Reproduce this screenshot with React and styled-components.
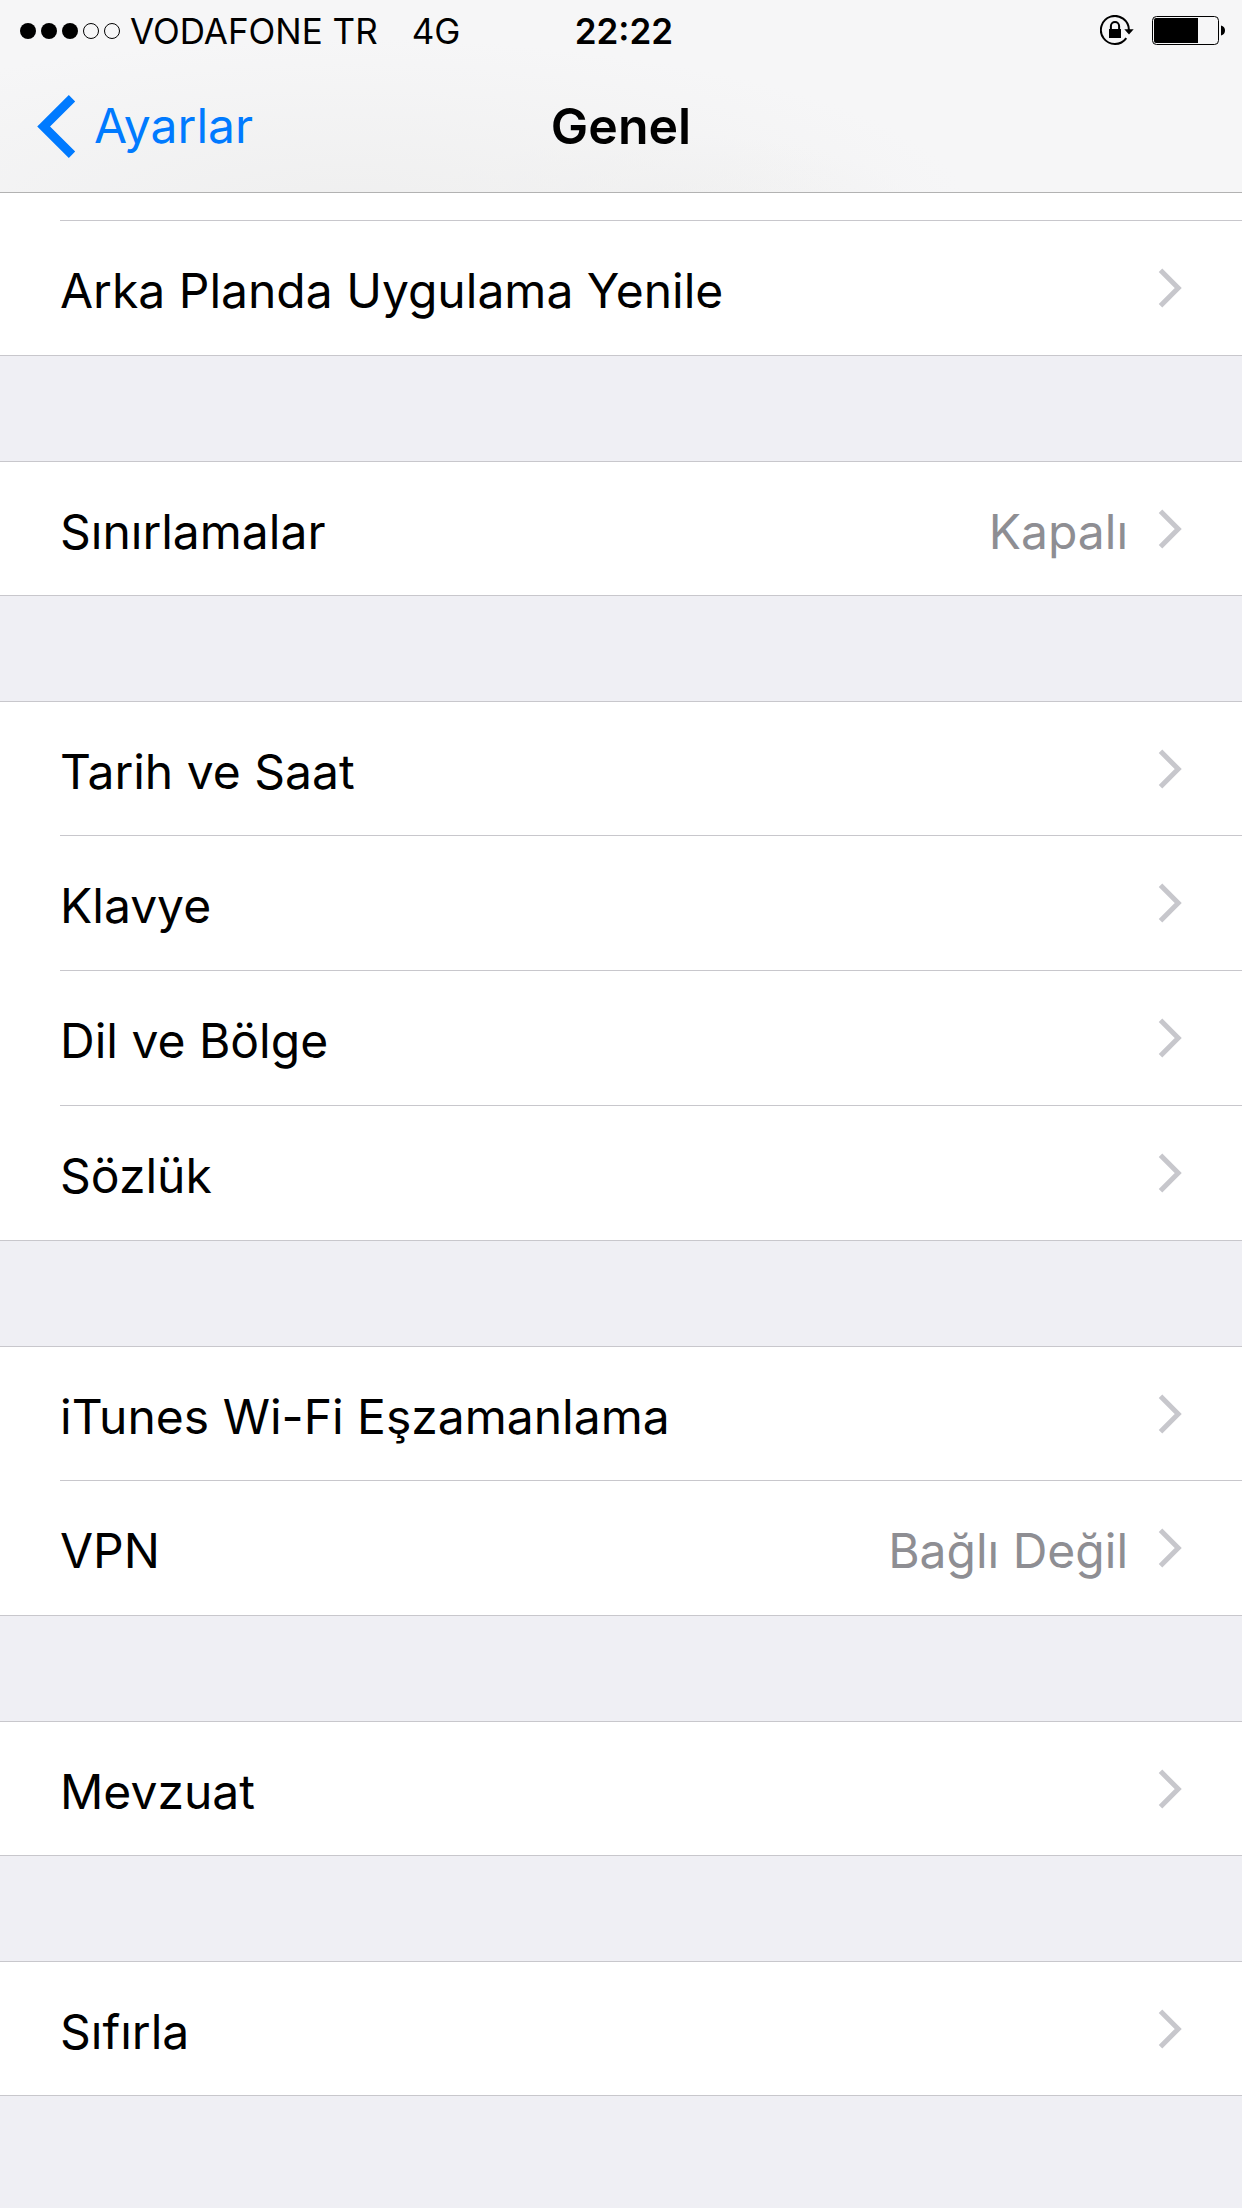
import React from 'react'
import styled, { createGlobalStyle, css, ThemeProvider } from 'styled-components'

const theme = {
  pageBackgroundColor: '#efeff4',
  rowBackgroundColor: '#ffffff',
  separatorColor: '#c8c7cc',
  barBorderColor: '#b2b2b2',
  tintColor: '#007aff',
  textColor: '#000000',
  valueColor: '#8e8e93',
  chevronColor: '#c7c7cc'
}

const GlobalStyle = createGlobalStyle`
  * {
    box-sizing: border-box;
  }
  body {
    margin: 0;
    background: ${props => props.theme.pageBackgroundColor};
    color: ${props => props.theme.textColor};
    font-family: Inter, "Liberation Sans", sans-serif;
  }
`

const StyledScreen = styled.div`
  display: flex;
  flex-direction: column;
  min-height: 100vh;
`

const StyledHeader = styled.header`
  flex-shrink: 0;
  border-bottom: 1px solid ${props => props.theme.barBorderColor};
  background:
    radial-gradient(ellipse 50% 90% at 28% 110%, #efefef, transparent),
    radial-gradient(ellipse 20% 40% at 54% 110%, #f1f1f1, transparent),
    #f6f6f7;
`

const StatusBar = styled.div`
  display: grid;
  grid-template-columns: 46% 1fr auto;
  align-items: center;
  height: 62px;
  padding: 0 16px 0 20px;
  font-size: 35px;
  line-height: 40px;
`

const StatusGroup = styled.div`
  display: flex;
  align-items: center;
  gap: ${props => props.gap};
`

const Time = styled.time`
  font-weight: 600;
`

const NavBar = styled.nav`
  display: grid;
  grid-template-columns: 1fr auto 1fr;
  align-items: center;
  height: 130px;
  padding: 0 36px 2px;
  font-size: 48px;
  line-height: 60px;
`

const BackButton = styled.button`
  display: flex;
  align-items: center;
  justify-self: start;
  gap: 18px;
  padding: 0;
  border: 0;
  background: transparent;
  color: ${props => props.theme.tintColor};
  font: inherit;
  cursor: pointer;
`

const Title = styled.h1`
  margin: 0;
  font-size: 50px;
  font-weight: 600;
`

const Content = styled.main`
  display: flex;
  flex-direction: column;
  gap: 105px;
  padding-bottom: 112px;
`

const StyledGroup = styled.ul`
  margin: 0;
  padding: 0;
  list-style: none;
  background: ${props => props.theme.rowBackgroundColor};
  border: solid ${props => props.theme.separatorColor};
  border-width: 1px 0;
  ${props => props.$isCut && css`
    border-top-width: 0;
  `}
`

const StyledItem = styled.li`
  padding-left: 60px;
  & + & > a {
    min-height: 135px;
    border-top: 1px solid ${props => props.theme.separatorColor};
  }
`

// bottom edge of the row that is scrolled under the header
const CutItem = styled(StyledItem)`
  height: 27px;
`

const RowLink = styled.a`
  display: flex;
  align-items: center;
  gap: 30px;
  min-height: 133px;
  padding-right: 60px;
  color: inherit;
  font-size: 48px;
  line-height: 60px;
  text-decoration: none;
`

const Label = styled.span`
  flex-grow: 1;
  padding-top: 6px;
`

const Value = styled.span`
  padding-top: 6px;
  color: ${props => props.theme.valueColor};
`

const ChevronIcon = styled.svg`
  flex-shrink: 0;
  color: ${props => props.theme.chevronColor};
`

const groups = [
  {
    isCut: true,
    rows: [{ id: 'arka-plan', label: 'Arka Planda Uygulama Yenile' }]
  },
  {
    rows: [{ id: 'sinirlamalar', label: 'Sınırlamalar', value: 'Kapalı' }]
  },
  {
    rows: [
      { id: 'tarih', label: 'Tarih ve Saat' },
      { id: 'klavye', label: 'Klavye' },
      { id: 'dil', label: 'Dil ve Bölge' },
      { id: 'sozluk', label: 'Sözlük' }
    ]
  },
  {
    rows: [
      { id: 'itunes', label: 'iTunes Wi-Fi Eşzamanlama' },
      { id: 'vpn', label: 'VPN', value: 'Bağlı Değil' }
    ]
  },
  {
    rows: [{ id: 'mevzuat', label: 'Mevzuat' }]
  },
  {
    rows: [{ id: 'sifirla', label: 'Sıfırla' }]
  }
]

const Signal = ({ strength }) => (
  <svg width='100' height='16' viewBox='0 0 100 16' aria-hidden='true'>
    {[0, 1, 2, 3, 4].map(i => (
      <circle
        key={i}
        cx={8 + i * 21}
        cy='8'
        r={i < strength ? 8 : 7.5}
        fill={i < strength ? '#000' : 'none'}
        stroke={i < strength ? 'none' : '#000'}
      />
    ))}
  </svg>
)

const RotationLock = () => (
  <svg width='34' height='32' viewBox='0 0 34 32' aria-hidden='true'>
    <path d='M28.9 15A14 14 0 1 0 26.3 23.1' fill='none' stroke='#000' strokeWidth='2' />
    <path d='M24.3 14.3H33.7L29 19.4Z' />
    <path d='M9 14H21V23H9Z' />
    <path d='M10.9 14.5V11A4.1 4.1 0 0 1 19.1 11V14.5' fill='none' stroke='#000' strokeWidth='2' />
  </svg>
)

const Battery = () => (
  <svg width='74' height='32' viewBox='0 0 74 32' aria-hidden='true'>
    <rect x='0.5' y='1.5' width='66' height='28' rx='4' fill='none' stroke='#000' />
    <path d='M4 3H46V28H4Q2 28 2 26V5Q2 3 4 3Z' />
    <path d='M69 10.5Q73 11.5 73 15.5Q73 19.5 69 20.5Z' />
  </svg>
)

const Row = ({ id, label, value }) => (
  <StyledItem>
    <RowLink href={`#${id}`}>
      <Label>{label}</Label>
      {value && <Value>{value}</Value>}
      <ChevronIcon width='24' height='40' viewBox='0 0 24 40' aria-hidden='true'>
        <path d='M2.5 2.3L20.2 20L2.5 37.7' fill='none' stroke='currentColor' strokeWidth='5' />
      </ChevronIcon>
    </RowLink>
  </StyledItem>
)

const Header = () => (
  <StyledHeader>
    <StatusBar>
      <StatusGroup gap='34px'>
        <StatusGroup gap='10px'>
          <Signal strength={3} />
          <span>VODAFONE TR</span>
        </StatusGroup>
        <span>4G</span>
      </StatusGroup>
      <Time>22:22</Time>
      <StatusGroup gap='18px'>
        <RotationLock />
        <Battery />
      </StatusGroup>
    </StatusBar>
    <NavBar>
      <BackButton type='button'>
        <svg width='40' height='64' viewBox='0 0 40 64' aria-hidden='true'>
          <path d='M36 4.2L7.6 32.5L36 60.8' fill='none' stroke='currentColor' strokeWidth='9' />
        </svg>
        Ayarlar
      </BackButton>
      <Title>Genel</Title>
    </NavBar>
  </StyledHeader>
)

const App = () => (
  <ThemeProvider theme={theme}>
    <GlobalStyle />
    <StyledScreen>
      <Header />
      <Content>
        {groups.map(group => (
          <StyledGroup key={group.rows[0].id} $isCut={group.isCut}>
            {group.isCut && <CutItem aria-hidden='true' />}
            {group.rows.map(row => <Row key={row.id} {...row} />)}
          </StyledGroup>
        ))}
      </Content>
    </StyledScreen>
  </ThemeProvider>
)

export default App
